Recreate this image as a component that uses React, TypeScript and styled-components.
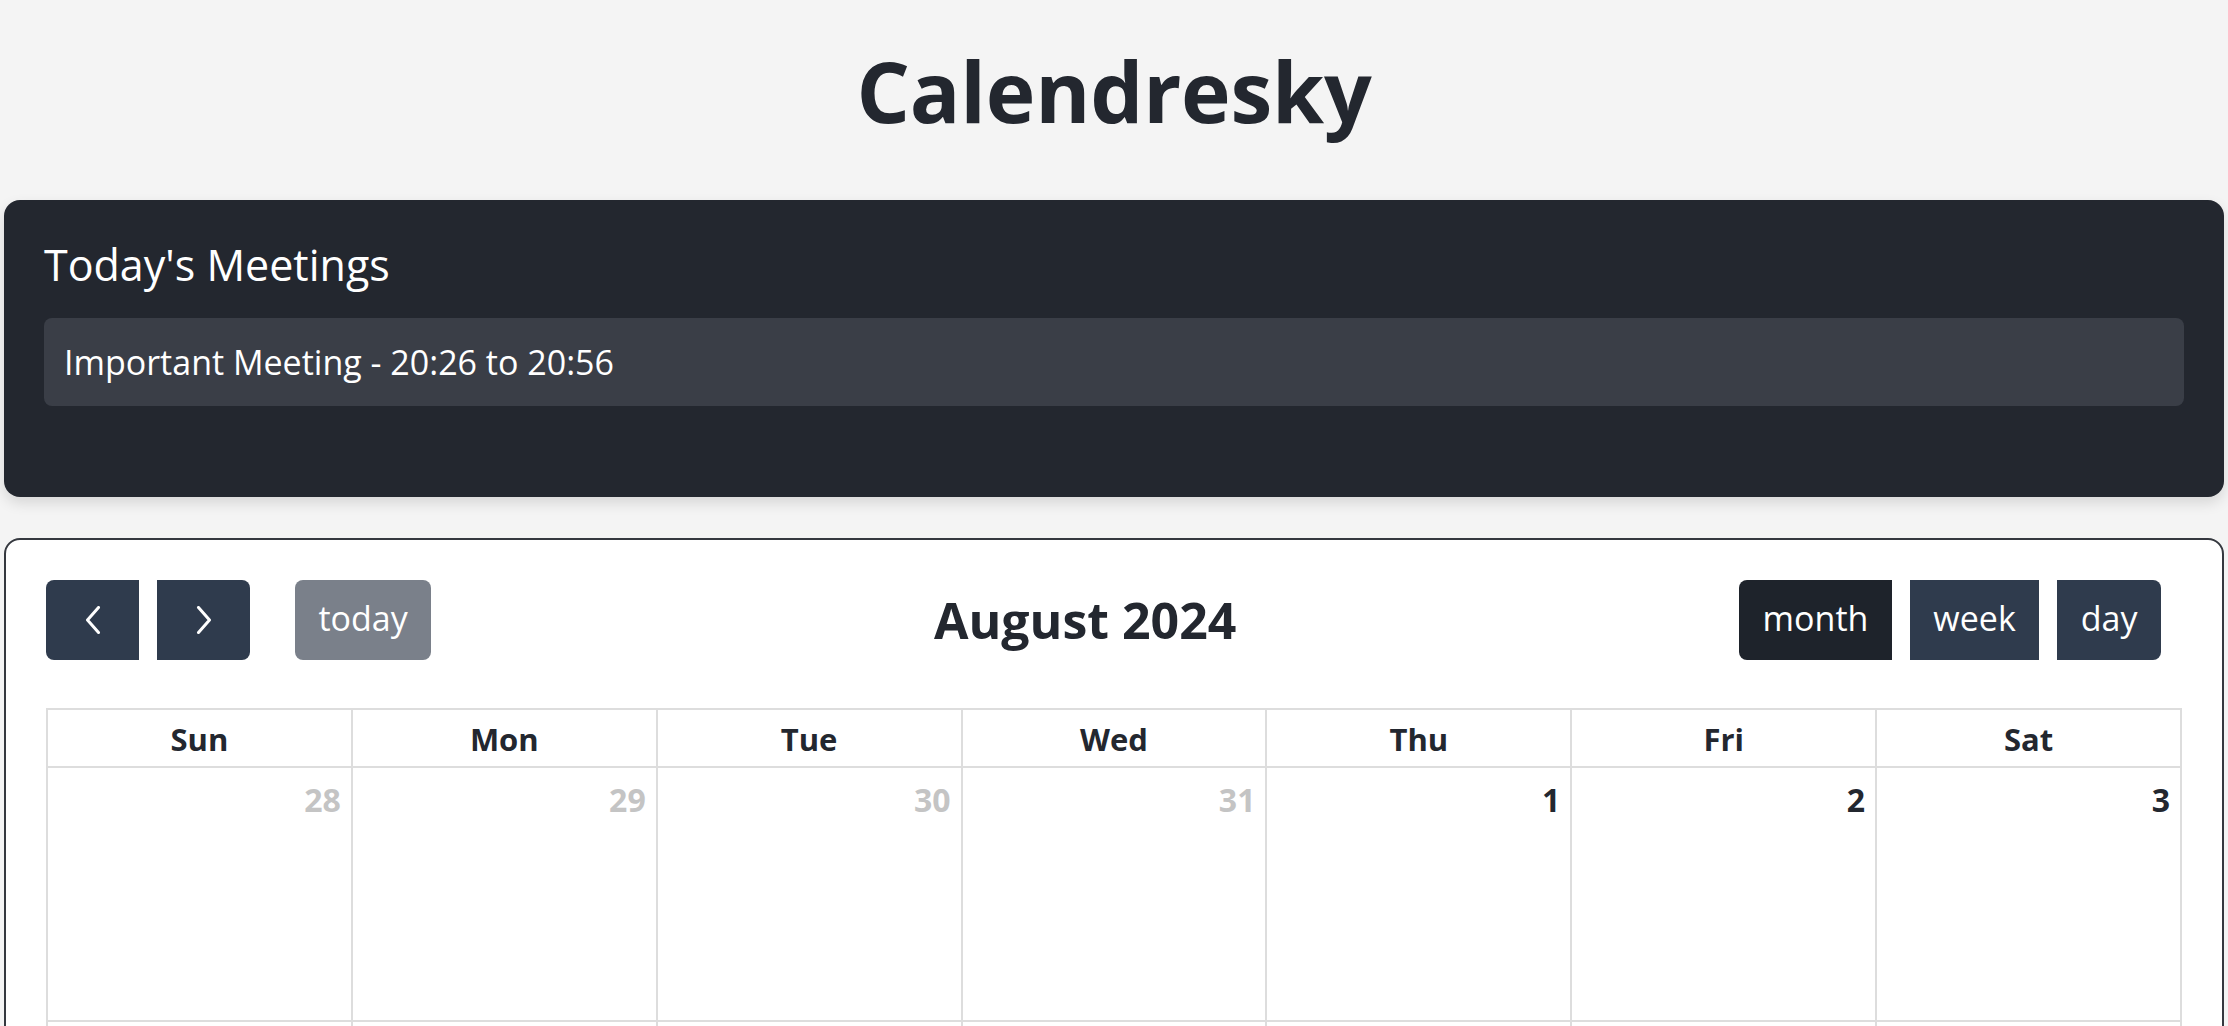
import React from 'react';
import styled, { createGlobalStyle, css } from 'styled-components';

const GlobalStyle = createGlobalStyle`
  html, body {
    margin: 0;
    padding: 0;
    background: #f4f4f4;
  }
  body {
    font-family: "Open Sans", "Noto Sans", sans-serif;
    color: #23272f;
  }
  *, *::before, *::after {
    box-sizing: border-box;
  }
`;

const Page = styled.div`
  padding: 1px 4px 0;
`;

const AppTitle = styled.h1`
  margin: 40px 0 58px;
  text-align: center;
  font-size: 84px;
  font-weight: 700;
  line-height: 1.2;
  letter-spacing: -0.2px;
  color: #23272f;
`;

const MeetingsPanel = styled.section`
  background: #23272f;
  border-radius: 16px;
  padding: 39px 40px 91px;
  box-shadow: 0 6px 14px rgba(0, 0, 0, 0.12);
  color: #ffffff;
`;

const PanelTitle = styled.h2`
  margin: 0 0 28px;
  font-size: 43px;
  font-weight: 400;
  line-height: 1.2;
`;

const MeetingList = styled.ul`
  list-style: none;
  margin: 0;
  padding: 0;
  display: flex;
  flex-direction: column;
  gap: 12px;
`;

const MeetingItem = styled.li`
  background: #3a3e47;
  border-radius: 8px;
  padding: 18px 20px;
  font-size: 34px;
  line-height: 52px;
`;

const CalendarCard = styled.section`
  margin-top: 41px;
  background: #ffffff;
  border: 2px solid #35383f;
  border-radius: 16px;
  padding: 40px;
`;

const Toolbar = styled.div`
  display: flex;
  align-items: center;
  justify-content: space-between;
  margin-bottom: 48px;
`;

const ToolbarChunk = styled.div<{ $trail?: boolean }>`
  display: flex;
  align-items: center;
  gap: 18px;
  margin-right: ${(p) => (p.$trail ? '21px' : '0')};
`;

const TodaySpacer = styled.div`
  margin-left: 27px;
`;

type Shape = 'left' | 'right' | 'middle' | 'round';
type Variant = 'normal' | 'active' | 'disabled';

const radiusFor = (shape: Shape) => {
  switch (shape) {
    case 'left':
      return '8px 0 0 8px';
    case 'right':
      return '0 8px 8px 0';
    case 'middle':
      return '0';
    default:
      return '8px';
  }
};

const bgFor = (variant: Variant) => {
  switch (variant) {
    case 'active':
      return '#1e232b';
    case 'disabled':
      return '#7a808a';
    default:
      return '#2f3b4d';
  }
};

const ToolButton = styled.button<{ $shape: Shape; $variant: Variant; $icon?: boolean }>`
  height: 80px;
  border: none;
  margin: 0;
  font-family: inherit;
  font-size: 34px;
  font-weight: 400;
  color: #ffffff;
  background: ${(p) => bgFor(p.$variant)};
  border-radius: ${(p) => radiusFor(p.$shape)};
  display: inline-flex;
  align-items: center;
  justify-content: center;
  cursor: pointer;
  ${(p) =>
    p.$icon
      ? css`
          width: 93px;
          padding: 0;
        `
      : css`
          padding: 0 23.5px 4px;
        `}
`;

const MonthTitle = styled.h2`
  margin: 0;
  font-size: 50px;
  font-weight: 700;
  line-height: 1.2;
  color: #23272f;
`;

const Grid = styled.div`
  display: grid;
  grid-template-columns: repeat(7, 1fr);
  border-top: 2px solid #dddddd;
  border-left: 2px solid #dddddd;
`;

const HeaderCell = styled.div`
  border-right: 2px solid #dddddd;
  border-bottom: 2px solid #dddddd;
  padding: 5px 4px 3px;
  text-align: center;
  font-size: 31px;
  font-weight: 700;
  line-height: 48px;
  color: #23272f;
`;

const DayCell = styled.div`
  height: 254px;
  border-right: 2px solid #dddddd;
  border-bottom: 2px solid #dddddd;
  padding: 8px 10px;
  text-align: right;
`;

const DayNumber = styled.span<{ $other: boolean }>`
  font-size: 32px;
  font-weight: 700;
  line-height: 48px;
  color: ${(p) => (p.$other ? '#c4c4c4' : '#23272f')};
`;

const Chevron = ({ dir }: { dir: 'left' | 'right' }) => (
  <svg width="16" height="28" viewBox="0 0 16 28" fill="none" aria-hidden="true">
    <path
      d={dir === 'left' ? 'M13.5 1.5 L2.5 14 L13.5 26.5' : 'M2.5 1.5 L13.5 14 L2.5 26.5'}
      stroke="#ffffff"
      strokeWidth="3"
      strokeLinecap="round"
      strokeLinejoin="round"
    />
  </svg>
);

const weekdays = ['Sun', 'Mon', 'Tue', 'Wed', 'Thu', 'Fri', 'Sat'];

const buildDays = () => {
  const days: { n: number; other: boolean }[] = [];
  [28, 29, 30, 31].forEach((n) => days.push({ n, other: true }));
  for (let n = 1; n <= 31; n++) days.push({ n, other: false });
  for (let n = 1; n <= 7; n++) days.push({ n, other: true });
  return days;
};

export default function App() {
  const days = buildDays();
  return (
    <>
      <GlobalStyle />
      <Page>
        <AppTitle>Calendresky</AppTitle>
        <MeetingsPanel>
          <PanelTitle>Today's Meetings</PanelTitle>
          <MeetingList>
            <MeetingItem>Important Meeting - 20:26 to 20:56</MeetingItem>
          </MeetingList>
        </MeetingsPanel>
        <CalendarCard>
          <Toolbar>
            <ToolbarChunk>
              <ToolButton $shape="left" $variant="normal" $icon aria-label="prev">
                <Chevron dir="left" />
              </ToolButton>
              <ToolButton $shape="right" $variant="normal" $icon aria-label="next">
                <Chevron dir="right" />
              </ToolButton>
              <TodaySpacer>
                <ToolButton $shape="round" $variant="disabled">today</ToolButton>
              </TodaySpacer>
            </ToolbarChunk>
            <MonthTitle>August 2024</MonthTitle>
            <ToolbarChunk $trail>
              <ToolButton $shape="left" $variant="active">month</ToolButton>
              <ToolButton $shape="middle" $variant="normal">week</ToolButton>
              <ToolButton $shape="right" $variant="normal">day</ToolButton>
            </ToolbarChunk>
          </Toolbar>
          <Grid>
            {weekdays.map((d) => (
              <HeaderCell key={d}>{d}</HeaderCell>
            ))}
            {days.map((d, i) => (
              <DayCell key={i}>
                <DayNumber $other={d.other}>{d.n}</DayNumber>
              </DayCell>
            ))}
          </Grid>
        </CalendarCard>
      </Page>
    </>
  );
}
